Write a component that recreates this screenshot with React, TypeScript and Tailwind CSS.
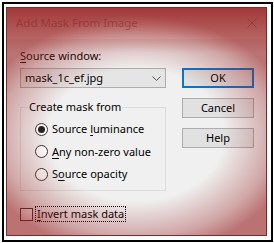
import React from "react";

const font = { fontFamily: '"Noto Sans", "Open Sans", sans-serif' };

function U({ children }: { children: React.ReactNode }) {
  return <span className="underline underline-offset-[2px] decoration-[1px]">{children}</span>;
}

function Radio({ checked, children }: { checked?: boolean; children: React.ReactNode }) {
  return (
    <div className="flex items-center h-[16px]">
      <div className="w-[13px] h-[13px] rounded-full border border-[#333] bg-white flex items-center justify-center">
        {checked && <div className="w-[7px] h-[7px] rounded-full bg-[#222]" />}
      </div>
      <span className="ml-[4px] text-[11px] leading-[16px] text-black">{children}</span>
    </div>
  );
}

function Btn({ children, def }: { children: React.ReactNode; def?: boolean }) {
  return (
    <div
      className={
        def
          ? "w-[72px] h-[20px] border-2 border-[#0078d7] bg-[#e1e1e1] flex items-center justify-center text-[11px] text-black"
          : "w-[72px] h-[20px] border border-[#adadad] bg-[#e1e1e1] flex items-center justify-center text-[11px] text-black"
      }
    >
      {children}
    </div>
  );
}

export default function App() {
  return (
    <div className="w-[274px] h-[243px] bg-white pt-[2px] pl-[2px] pr-[1px] pb-[1.5px]" style={font}>
      <div className="h-full border-2 border-black pl-[2px] pt-[2.5px] pr-[4px] pb-[3.5px]">
        <div className="relative h-full border border-[#7a2a2a] bg-[#f0f0f0] flex flex-col overflow-hidden">
          <div className="h-[31px] flex items-center justify-between pl-[9px] pr-[9px] bg-white">
            <span className="text-[11.5px] leading-[16px] text-[#999999]">Add Mask From Image</span>
            <svg width="10" height="10" viewBox="0 0 10 10">
              <path d="M0.5 0.5 L9.5 9.5 M9.5 0.5 L0.5 9.5" stroke="#999" strokeWidth="1" />
            </svg>
          </div>
          <div className="flex flex-col pl-[13px] pt-[9px]">
            <div className="text-[11px] leading-[16px] text-black">
              <U>S</U>ource window:
            </div>
            <div className="flex mt-[4.5px]">
              <div className="w-[146px] flex flex-col">
                <div className="h-[20px] border border-[#adadad] bg-[#e5e5e5] flex items-center justify-between pl-[4px] pr-[4px]">
                  <span className="text-[11px] leading-[16px] text-black">mask_1c_ef.jpg</span>
                  <svg width="9" height="5" viewBox="0 0 9 5">
                    <path d="M0.5 0.5 L4.5 4.5 L8.5 0.5" stroke="#555" strokeWidth="1" fill="none" />
                  </svg>
                </div>
                <fieldset className="mt-[11px] border border-[#dcdcdc] pl-[14px] pb-[8px]">
                  <legend className="ml-[-7px] px-[1px] text-[11px] leading-[16px] text-black">Create mask from</legend>
                  <div className="pt-[6px] flex flex-col gap-[6.5px]">
                    <Radio checked>
                      Source <U>l</U>uminance
                    </Radio>
                    <Radio>
                      <U>A</U>ny non-zero value
                    </Radio>
                    <Radio>
                      S<U>o</U>urce opacity
                    </Radio>
                  </div>
                </fieldset>
              </div>
              <div className="ml-[16px] flex flex-col gap-[10px]">
                <Btn def>OK</Btn>
                <Btn>Cancel</Btn>
                <Btn>Help</Btn>
              </div>
            </div>
            <div className="flex items-center mt-[15px]">
              <div className="w-[13px] h-[13px] border border-[#333] bg-white" />
              <span className="ml-[2px] px-[1px] border border-dotted border-black text-[11px] leading-[14px] text-black">
                <U>I</U>nvert mask data
              </span>
            </div>
          </div>
          <div className="pointer-events-none absolute inset-0 bg-[radial-gradient(ellipse_160px_120px_at_50%_56%,rgba(150,30,30,0)_55%,rgba(150,30,30,0.35)_85%,rgba(150,30,30,0.6)_100%)]" />
          <div className="pointer-events-none absolute inset-0 bg-[linear-gradient(to_bottom,rgba(150,30,30,0.7)_0px,rgba(150,30,30,0)_45px)]" />
        </div>
      </div>
    </div>
  );
}
